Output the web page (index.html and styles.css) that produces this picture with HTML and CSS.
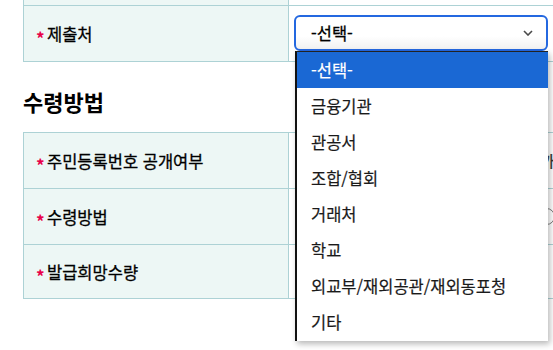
FILE: index.html
```html
<!DOCTYPE html>
<html lang="ko">
<head>
  <meta charset="UTF-8">
  <meta name="viewport" content="width=device-width, initial-scale=1.0">
  <title>증명서 신청</title>
  <link rel="stylesheet" href="styles.css">
</head>
<body>
  <div class="page">
    <table class="form-table">
      <tr class="row-prev">
        <th><span class="req">*</span>용도</th>
        <td></td>
      </tr>
      <tr class="row-select">
        <th><span class="req">*</span>제출처</th>
        <td>
          <div class="select-wrap">
            <div class="select">
              <span>-선택-</span>
              <svg class="chevron" width="10" height="6" viewBox="0 0 10 6">
                <path d="M1 1 L5 5 L9 1" fill="none" stroke="#4a4a4a" stroke-width="1.6"/>
              </svg>
            </div>
            <ul class="options">
              <li class="selected">-선택-</li>
              <li>금융기관</li>
              <li>관공서</li>
              <li>조합/협회</li>
              <li>거래처</li>
              <li>학교</li>
              <li>외교부/재외공관/재외동포청</li>
              <li>기타</li>
            </ul>
          </div>
        </td>
      </tr>
    </table>

    <h2>수령방법</h2>

    <table class="form-table">
      <tr>
        <th><span class="req">*</span>주민등록번호 공개여부</th>
        <td>
          <div class="radios">
            <label class="radio"><span class="dot"></span>공개</label>
            <label class="radio"><span class="dot"></span>비공개</label>
            <span class="note">(뒷자리 공개 여부)</span>
          </div>
        </td>
      </tr>
      <tr>
        <th><span class="req">*</span>수령방법</th>
        <td>
          <div class="radios">
            <label class="radio wide"><span class="dot"></span>방문수령</label>
            <label class="radio wide"><span class="dot"></span>우편수령</label>
            <label class="radio wide"><span class="dot"></span>전자우편</label>
          </div>
        </td>
      </tr>
      <tr class="row-last">
        <th><span class="req">*</span>발급희망수량</th>
        <td>
          <div class="radios">
            <span class="count">1</span> 부
          </div>
        </td>
      </tr>
    </table>
  </div>
</body>
</html>
```

FILE: styles.css
```css
:root {
  --border: #add2d5;
  --th-bg: #edf7f5;
  --text: #000000;
  --req: #e8004a;
  --focus: #2468e0;
  --highlight: #1a68d4;
}

* {
  margin: 0;
  padding: 0;
  box-sizing: border-box;
}

body {
  font-family: "Noto Sans CJK KR", "Noto Sans", sans-serif;
  color: var(--text);
  background: #ffffff;
  overflow: hidden;
}

.page {
  height: 350px;
  padding-left: 23px;
  overflow: hidden;
}

.form-table {
  width: 640px;
  border-collapse: collapse;
  table-layout: fixed;
}

.form-table:first-child {
  margin-top: -50px;
}

.form-table th,
.form-table td {
  border: 1px solid var(--border);
  font-size: 16.5px;
  font-weight: 400;
  text-align: left;
  vertical-align: middle;
  -webkit-text-stroke: 0.3px currentColor;
}

.form-table th {
  width: 265px;
  background: var(--th-bg);
  padding: 0 11px 0 12px;
  height: 56px;
  white-space: nowrap;
}

.form-table td {
  padding: 0 5px;
}

.row-prev th {
  height: 55px;
}

.row-last th {
  height: 54px;
}

.row-select td {
  padding: 8px 5px 9px;
}

.req {
  display: inline-block;
  width: 11px;
  color: var(--req);
  font-size: 17px;
  font-weight: 700;
  line-height: 1;
  transform: translateY(4px);
  -webkit-text-stroke: 0;
}

h2 {
  font-size: 22px;
  font-weight: 700;
  line-height: 32px;
  margin: 23px 0 15px;
}

/* select + native-looking popup */
.select-wrap {
  position: relative;
  width: 254px;
}

.select {
  height: 36px;
  border: 2px solid var(--focus);
  border-radius: 6px;
  padding: 0 13px 0 15px;
  display: flex;
  align-items: center;
  justify-content: space-between;
  font-size: 16.5px;
  background: linear-gradient(#ffffff 60%, #f1f1f1);
}

.options {
  position: absolute;
  top: 100%;
  left: 1px;
  right: 0;
  list-style: none;
  background: #ffffff;
  border-top: 1px solid #222222;
  border-left: 2px solid #111111;
  box-shadow: 2px 3px 6px rgba(0, 0, 0, 0.28);
  padding-bottom: 1px;
  z-index: 10;
  -webkit-text-stroke: 0.2px currentColor;
}

.options li {
  height: 36px;
  line-height: 36px;
  padding-left: 14px;
  font-size: 16.5px;
  color: #1a1a1a;
  white-space: nowrap;
}

.options li.selected {
  background: var(--highlight);
  color: #ffffff;
}

.radios {
  display: flex;
  align-items: center;
  padding-left: 7px;
  white-space: nowrap;
}

.radio {
  display: flex;
  align-items: center;
  gap: 6px;
  margin-right: 24px;
}

.radio.wide {
  margin-right: 35px;
}

.dot {
  width: 17px;
  height: 17px;
  border: 1px solid #7a7a7a;
  border-radius: 50%;
  background: #ffffff;
  -webkit-text-stroke: 0;
}

.note {
  color: #333333;
}

.count {
  display: inline-block;
  width: 60px;
  height: 30px;
  border: 1px solid #cccccc;
  margin-right: 6px;
}
```
